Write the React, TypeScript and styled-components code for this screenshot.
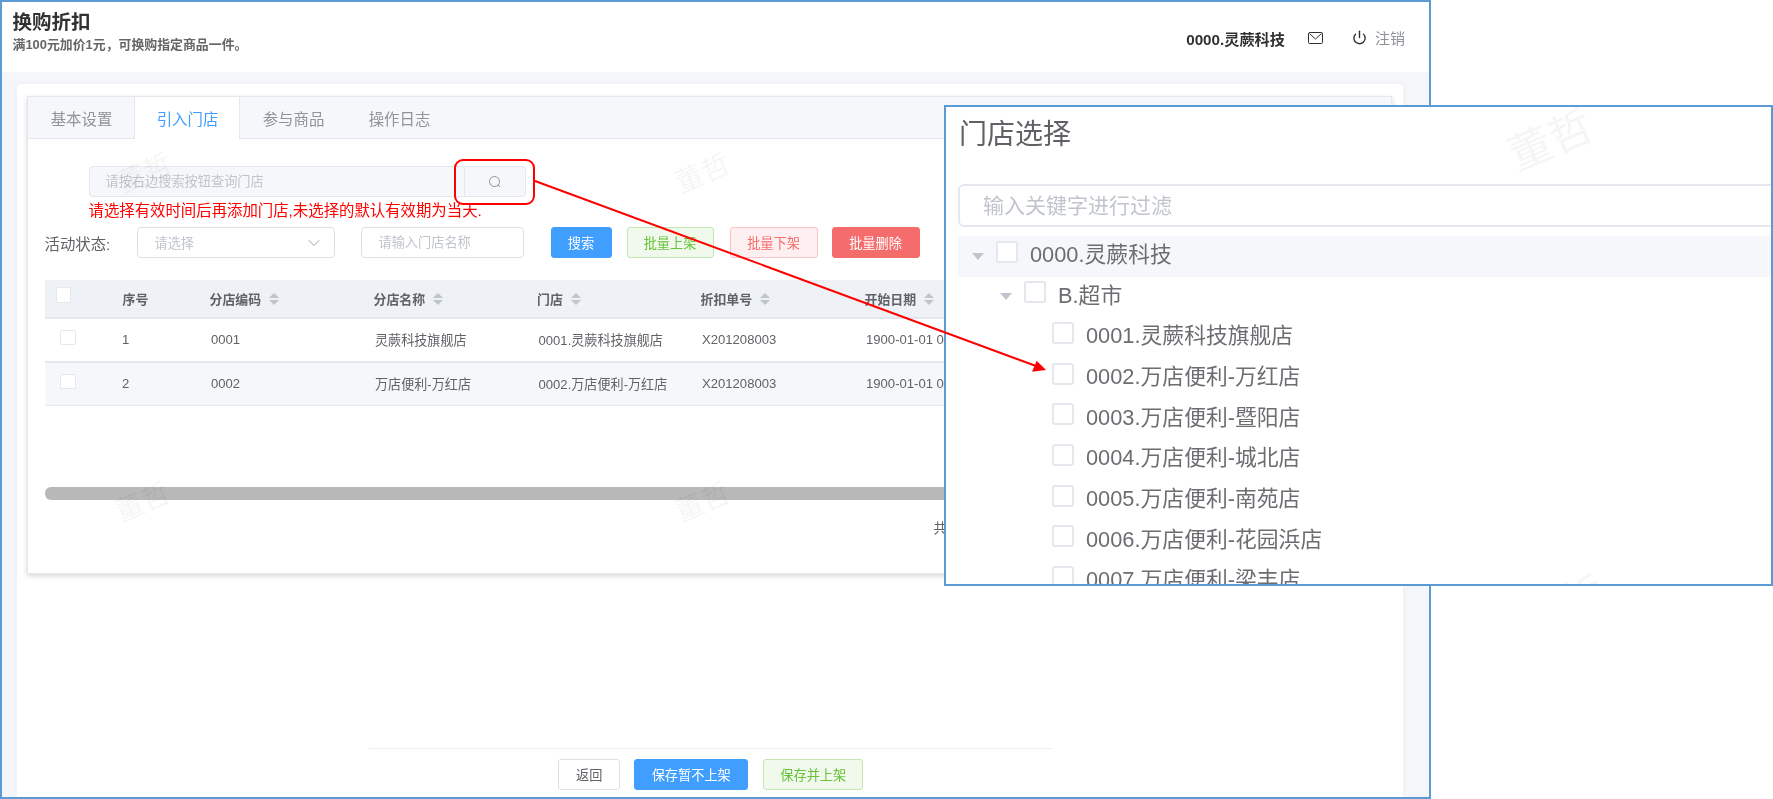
import React from "react";
import styled, { createGlobalStyle } from "styled-components";
import { ChevronDown, Power } from "lucide-react";

const Global = createGlobalStyle`
  html, body { margin: 0; padding: 0; background: #fff; }
  * { box-sizing: border-box; }
  body { font-family: "Liberation Sans", "Noto Sans CJK SC", sans-serif; color: #606266; }
`;

const Page = styled.div`
  position: relative;
  width: 1773px;
  height: 799px;
  overflow: hidden;
  background: #fff;
  filter: blur(0.35px);
`;

const AppWindow = styled.div`
  position: relative;
  width: 1431px;
  height: 799px;
  border: 2px solid #5b9bd5;
  display: flex;
  flex-direction: column;
  overflow: hidden;
`;

const Header = styled.header`
  height: 70px;
  flex: none;
  display: flex;
  justify-content: space-between;
  background: #fff;
  padding: 8px 24px 0 10.5px;
`;

const TitleBlock = styled.div`
  display: flex;
  flex-direction: column;
`;

const Title = styled.h1`
  margin: 0;
  font-size: 19.5px;
  line-height: 24px;
  font-weight: 700;
  color: #303133;
`;

const Subtitle = styled.p`
  margin: 2px 0 0;
  font-size: 12.9px;
  line-height: 18px;
  font-weight: 700;
  color: #666;
`;

const UserBar = styled.div`
  display: flex;
  align-items: center;
  height: 55px;
  color: #303133;
`;

const UserName = styled.span`
  font-size: 15.2px;
  font-weight: 700;
  color: #303133;
  margin-right: 23px;
`;

const Logout = styled.span`
  font-size: 15px;
  color: #909399;
  margin-left: 8px;
`;

const IconSlot = styled.span<{ $gap?: number }>`
  display: inline-flex;
  margin-right: ${(p) => p.$gap ?? 0}px;
`;

const Main = styled.main`
  flex: 1;
  min-height: 0;
  background: #f5f6f9;
  padding: 12px 26px 0 15px;
  display: flex;
`;

const Card = styled.div`
  flex: 1;
  background: #fff;
  border-radius: 4px 4px 0 0;
  padding: 12px 11px 7px 10.5px;
  display: flex;
  flex-direction: column;
  box-shadow: 0 0 6px rgba(0, 0, 0, 0.04);
`;

const TabBox = styled.section`
  height: 478px;
  flex: none;
  margin-left: -1px;
  border: 1px solid #e4e7ed;
  background: #fff;
  box-shadow: 0 2px 5px rgba(0, 0, 0, 0.16);
  display: flex;
  flex-direction: column;
`;

const TabBar = styled.div`
  height: 42px;
  flex: none;
  display: flex;
  background: #f5f7fa;
  border-bottom: 1px solid #e4e7ed;
`;

const Tab = styled.div<{ $active?: boolean }>`
  width: 106px;
  height: ${(p) => (p.$active ? 42 : 41)}px;
  padding-left: 2px;
  display: flex;
  align-items: center;
  justify-content: center;
  font-size: 15.4px;
  color: ${(p) => (p.$active ? "#409eff" : "#909399")};
  background: ${(p) => (p.$active ? "#fff" : "transparent")};
  border-left: 1px solid ${(p) => (p.$active ? "#e4e7ed" : "transparent")};
  border-right: 1px solid ${(p) => (p.$active ? "#e4e7ed" : "transparent")};
`;

const TabBody = styled.div`
  flex: 1;
  padding: 27px 11px 0 17px;
  display: flex;
  flex-direction: column;
  min-height: 0;
`;

const SearchGroup = styled.div`
  width: 437px;
  height: 31px;
  margin-left: 44px;
  display: flex;
  background: #f5f7fa;
  border: 1px solid #e4e7ed;
  border-radius: 4px;
  flex: none;
`;

const SearchField = styled.input`
  flex: 1;
  min-width: 0;
  border: 0;
  outline: 0;
  background: transparent;
  padding: 0 16px;
  font: 13.2px "Liberation Sans", "Noto Sans CJK SC", sans-serif;
  &::placeholder { color: #c0c4cc; opacity: 1; }
`;

const SearchAppend = styled.div`
  width: 61px;
  border-left: 1px solid #e4e7ed;
  display: flex;
  align-items: center;
  justify-content: center;
  color: #909399;
`;

const Notice = styled.div`
  margin-left: 44px;
  height: 30px;
  line-height: 28px;
  font-size: 15.4px;
  color: #f00;
  flex: none;
`;

const FilterRow = styled.div`
  display: flex;
  align-items: center;
  height: 31px;
  flex: none;
`;

const FilterLabel = styled.label`
  width: 92px;
  font-size: 15.4px;
  color: #606266;
`;

const FilterSelect = styled.div`
  width: 198px;
  height: 31px;
  margin-right: 26px;
  border: 1px solid #dcdfe6;
  border-radius: 4px;
  padding: 0 10px 0 17px;
  display: flex;
  align-items: center;
  justify-content: space-between;
  font-size: 13.2px;
  color: #c0c4cc;
`;

const FilterInput = styled.input`
  width: 163px;
  height: 31px;
  margin-right: 27px;
  border: 1px solid #dcdfe6;
  border-radius: 4px;
  padding: 0 17px;
  outline: 0;
  font: 13.2px "Liberation Sans", "Noto Sans CJK SC", sans-serif;
  &::placeholder { color: #c0c4cc; opacity: 1; }
`;

const toneStyles = {
  primary: "background:#409eff;border-color:#409eff;color:#fff;",
  success: "background:#f0f9eb;border-color:#c2e7b0;color:#67c23a;",
  dangerPlain: "background:#fef0f0;border-color:#fbc4c4;color:#f56c6c;",
  danger: "background:#f56c6c;border-color:#f56c6c;color:#fff;",
  neutral: "background:#fff;border-color:#dcdfe6;color:#606266;",
};

const Btn = styled.button<{ $tone: keyof typeof toneStyles; $w: number; $gap?: number }>`
  width: ${(p) => p.$w}px;
  height: 31px;
  margin-right: ${(p) => p.$gap ?? 0}px;
  border: 1px solid;
  border-radius: 3px;
  padding: 0;
  font: 13.2px "Liberation Sans", "Noto Sans CJK SC", sans-serif;
  ${(p) => toneStyles[p.$tone]}
`;

const Table = styled.div`
  margin-top: 22px;
  flex: none;
  overflow: hidden;
`;

const COLS = "77px 87px 164px 163.5px 163.5px 164px 1fr";

const HeadRow = styled.div`
  display: grid;
  grid-template-columns: ${COLS};
  height: 39px;
  background: #eef1f6;
  border-bottom: 2px solid #e4e7ed;
  align-items: center;
`;

const BodyRow = styled.div<{ $striped?: boolean; $last?: boolean }>`
  display: grid;
  grid-template-columns: ${COLS};
  height: ${(p) => (p.$last ? 43 : 44)}px;
  background: ${(p) => (p.$striped ? "#f5f7fa" : "#fff")};
  border-bottom: ${(p) => (p.$last ? "1px" : "2px")} solid #e4e7ed;
  align-items: center;
`;

const HeadCell = styled.div`
  font-size: 12.9px;
  font-weight: 700;
  color: #606266;
  padding-left: 1px;
  display: flex;
  align-items: center;
  white-space: nowrap;
`;

const Cell = styled.div<{ $flush?: boolean }>`
  font-size: 13.1px;
  color: #606266;
  padding: 0 0 2px ${(p) => (p.$flush ? 0.5 : 2.5)}px;
  white-space: nowrap;
`;

const SortCaret = styled.span`
  display: inline-flex;
  flex-direction: column;
  gap: 2px;
  margin-left: 8px;
  &::before, &::after {
    content: "";
    display: block;
    border-left: 5px solid transparent;
    border-right: 5px solid transparent;
  }
  &::before { border-bottom: 5.5px solid #c0c4cc; }
  &::after { border-top: 5.5px solid #c0c4cc; }
`;

const TableCheck = styled.span<{ $x: number; $y: number }>`
  display: block;
  width: 15.5px;
  height: 15.5px;
  margin-left: ${(p) => p.$x}px;
  margin-top: ${(p) => p.$y}px;
  background: #fff;
  border: 1px solid #e4e7ed;
  border-radius: 2px;
`;

const ScrollTrack = styled.div`
  margin-top: 81px;
  height: 13px;
  flex: none;
  background: #b8b8b8;
  border-radius: 6px;
`;

const Pager = styled.div`
  margin-top: 19px;
  padding-left: 889px;
  font-size: 13.2px;
  line-height: 20px;
  color: #606266;
  flex: none;
`;

const Footer = styled.footer`
  margin: auto 0 0 341.75px;
  width: 683px;
  border-top: 1px solid #ebeef5;
  padding-top: 10px;
  display: flex;
  justify-content: center;
`;

const Watermark = styled.span<{ $x: number; $y: number; $size: number }>`
  position: absolute;
  left: ${(p) => p.$x}px;
  top: ${(p) => p.$y}px;
  font-size: ${(p) => p.$size}px;
  line-height: 1;
  color: rgba(0, 0, 0, 0.04);
  transform: translate(-50%, -50%) rotate(-23deg);
  white-space: nowrap;
  pointer-events: none;
`;

const Picker = styled.aside`
  position: absolute;
  left: 944px;
  top: 105px;
  width: 829px;
  height: 481px;
  border: 2px solid #5b9bd5;
  background: #fff;
  overflow: hidden;
  padding: 0 0 0 12px;
`;

const PickerTitle = styled.h2`
  margin: 0;
  height: 52px;
  line-height: 56px;
  font-size: 28px;
  font-weight: 400;
  color: #606266;
  padding-left: 1px;
`;

const PickerFilter = styled.input`
  display: block;
  margin-top: 25px;
  width: calc(100% + 20px);
  height: 43px;
  border: 2px solid #e4e7ed;
  border-radius: 6px;
  padding: 0 23px;
  outline: 0;
  font: 21px "Liberation Sans", "Noto Sans CJK SC", sans-serif;
  &::placeholder { color: #c0c4cc; opacity: 1; }
`;

const Tree = styled.div`
  margin-top: 9px;
`;

const TreeRow = styled.div<{ $level: number; $hover?: boolean }>`
  height: 40.67px;
  display: flex;
  align-items: center;
  padding-left: ${(p) => 14 + p.$level * 28}px;
  background: ${(p) => (p.$hover ? "#f5f7fa" : "transparent")};
`;

const TreeCaret = styled.span<{ $open?: boolean }>`
  width: 0;
  height: 0;
  margin-right: 12px;
  border-left: 6px solid transparent;
  border-right: 6px solid transparent;
  border-top: 7px solid ${(p) => (p.$open ? "#c0c4cc" : "transparent")};
`;

const TreeCheck = styled.span`
  width: 22px;
  height: 22px;
  margin: 0 12px 9px 0;
  border: 2px solid #e4e7ed;
  border-radius: 3px;
  background: #fff;
  flex: none;
`;

const TreeLabel = styled.span`
  font-size: 21.8px;
  line-height: 30px;
  margin-bottom: 2.5px;
  color: #6b6d71;
  white-space: nowrap;
`;

const Annotation = styled.svg`
  position: absolute;
  left: 0;
  top: 0;
  pointer-events: none;
`;

const headers = ["分店编码", "分店名称", "门店", "折扣单号", "开始日期"];
const rows = [
  ["1", "0001", "灵蕨科技旗舰店", "0001.灵蕨科技旗舰店", "X201208003", "1900-01-01 00:00:00"],
  ["2", "0002", "万店便利-万红店", "0002.万店便利-万红店", "X201208003", "1900-01-01 00:00:00"],
];
const stores = [
  "0001.灵蕨科技旗舰店",
  "0002.万店便利-万红店",
  "0003.万店便利-暨阳店",
  "0004.万店便利-城北店",
  "0005.万店便利-南苑店",
  "0006.万店便利-花园浜店",
  "0007.万店便利-梁丰店",
];

export default function App() {
  return (
    <Page>
      <Global />
      <AppWindow>
        <Header>
          <TitleBlock>
            <Title>换购折扣</Title>
            <Subtitle>满100元加价1元，可换购指定商品一件。</Subtitle>
          </TitleBlock>
          <UserBar>
            <UserName>0000.灵蕨科技</UserName>
            <IconSlot $gap={29}>
              <svg width="15" height="12" viewBox="0 0 15 12" fill="none" stroke="#303133" strokeWidth="1">
                <rect x="0.5" y="0.5" width="14" height="11" rx="1.2" />
                <path d="M1.5 1.5 L7.5 7 L13.5 1.5" />
              </svg>
            </IconSlot>
            <IconSlot>
              <Power size={15} strokeWidth={2.2} color="#303133" />
            </IconSlot>
            <Logout>注销</Logout>
          </UserBar>
        </Header>
        <Main>
          <Card>
            <TabBox>
              <TabBar>
                <Tab>基本设置</Tab>
                <Tab $active>引入门店</Tab>
                <Tab>参与商品</Tab>
                <Tab>操作日志</Tab>
              </TabBar>
              <TabBody>
                <SearchGroup>
                  <SearchField disabled placeholder="请按右边搜索按钮查询门店" />
                  <SearchAppend>
                    <svg width="14" height="14" viewBox="0 0 14 14" fill="none" stroke="#909399" strokeWidth="1">
                      <circle cx="6.5" cy="6.5" r="5" />
                      <path d="M10 10 L12 12" />
                    </svg>
                  </SearchAppend>
                </SearchGroup>
                <Notice>请选择有效时间后再添加门店,未选择的默认有效期为当天.</Notice>
                <FilterRow>
                  <FilterLabel>活动状态:</FilterLabel>
                  <FilterSelect>
                    <span>请选择</span>
                    <ChevronDown size={20} strokeWidth={1} color="#909399" />
                  </FilterSelect>
                  <FilterInput placeholder="请输入门店名称" />
                  <Btn $tone="primary" $w={61} $gap={15}>搜索</Btn>
                  <Btn $tone="success" $w={87} $gap={16}>批量上架</Btn>
                  <Btn $tone="dangerPlain" $w={88} $gap={14}>批量下架</Btn>
                  <Btn $tone="danger" $w={88}>批量删除</Btn>
                </FilterRow>
                <Table>
                  <HeadRow>
                    <HeadCell>
                      <TableCheck $x={10} $y={-7} />
                    </HeadCell>
                    <HeadCell>序号</HeadCell>
                    {headers.map((h) => (
                      <HeadCell key={h}>
                        {h}
                        <SortCaret />
                      </HeadCell>
                    ))}
                  </HeadRow>
                  {rows.map((r, i) => (
                    <BodyRow key={r[0]} $striped={i === 1} $last={i === 1}>
                      <Cell>
                        <TableCheck $x={13} $y={-3} />
                      </Cell>
                      {r.map((c, j) => (
                        <Cell key={c} $flush={j === 0}>{c}</Cell>
                      ))}
                    </BodyRow>
                  ))}
                </Table>
                <ScrollTrack />
                <Pager>共 2 条</Pager>
              </TabBody>
            </TabBox>
            <Footer>
              <Btn $tone="neutral" $w={62} $gap={14}>返回</Btn>
              <Btn $tone="primary" $w={114} $gap={15}>保存暂不上架</Btn>
              <Btn $tone="success" $w={100}>保存并上架</Btn>
            </Footer>
          </Card>
        </Main>
        <Watermark $x={143} $y={172} $size={28}>董哲</Watermark>
        <Watermark $x={701} $y={172} $size={28}>董哲</Watermark>
        <Watermark $x={141} $y={501} $size={28}>董哲</Watermark>
        <Watermark $x={701} $y={501} $size={28}>董哲</Watermark>
      </AppWindow>
      <Picker>
        <PickerTitle>门店选择</PickerTitle>
        <PickerFilter placeholder="输入关键字进行过滤" />
        <Tree>
          <TreeRow $level={0} $hover>
            <TreeCaret $open />
            <TreeCheck />
            <TreeLabel>0000.灵蕨科技</TreeLabel>
          </TreeRow>
          <TreeRow $level={1}>
            <TreeCaret $open />
            <TreeCheck />
            <TreeLabel>B.超市</TreeLabel>
          </TreeRow>
          {stores.map((s) => (
            <TreeRow $level={2} key={s}>
              <TreeCaret />
              <TreeCheck />
              <TreeLabel>{s}</TreeLabel>
            </TreeRow>
          ))}
        </Tree>
        <Watermark $x={605} $y={34} $size={43}>董哲</Watermark>
        <Watermark $x={618} $y={500} $size={43}>董哲</Watermark>
      </Picker>
      <Annotation width="1773" height="799" viewBox="0 0 1773 799" fill="none">
        <rect x="455" y="160" width="79" height="44" rx="8" stroke="#f00" strokeWidth="2" />
        <path d="M535 181 L1036 366" stroke="#f00" strokeWidth="2" />
        <path d="M1046 370 L1036.7 360.7 L1032 371.7 Z" fill="#f00" />
      </Annotation>
    </Page>
  );
}
